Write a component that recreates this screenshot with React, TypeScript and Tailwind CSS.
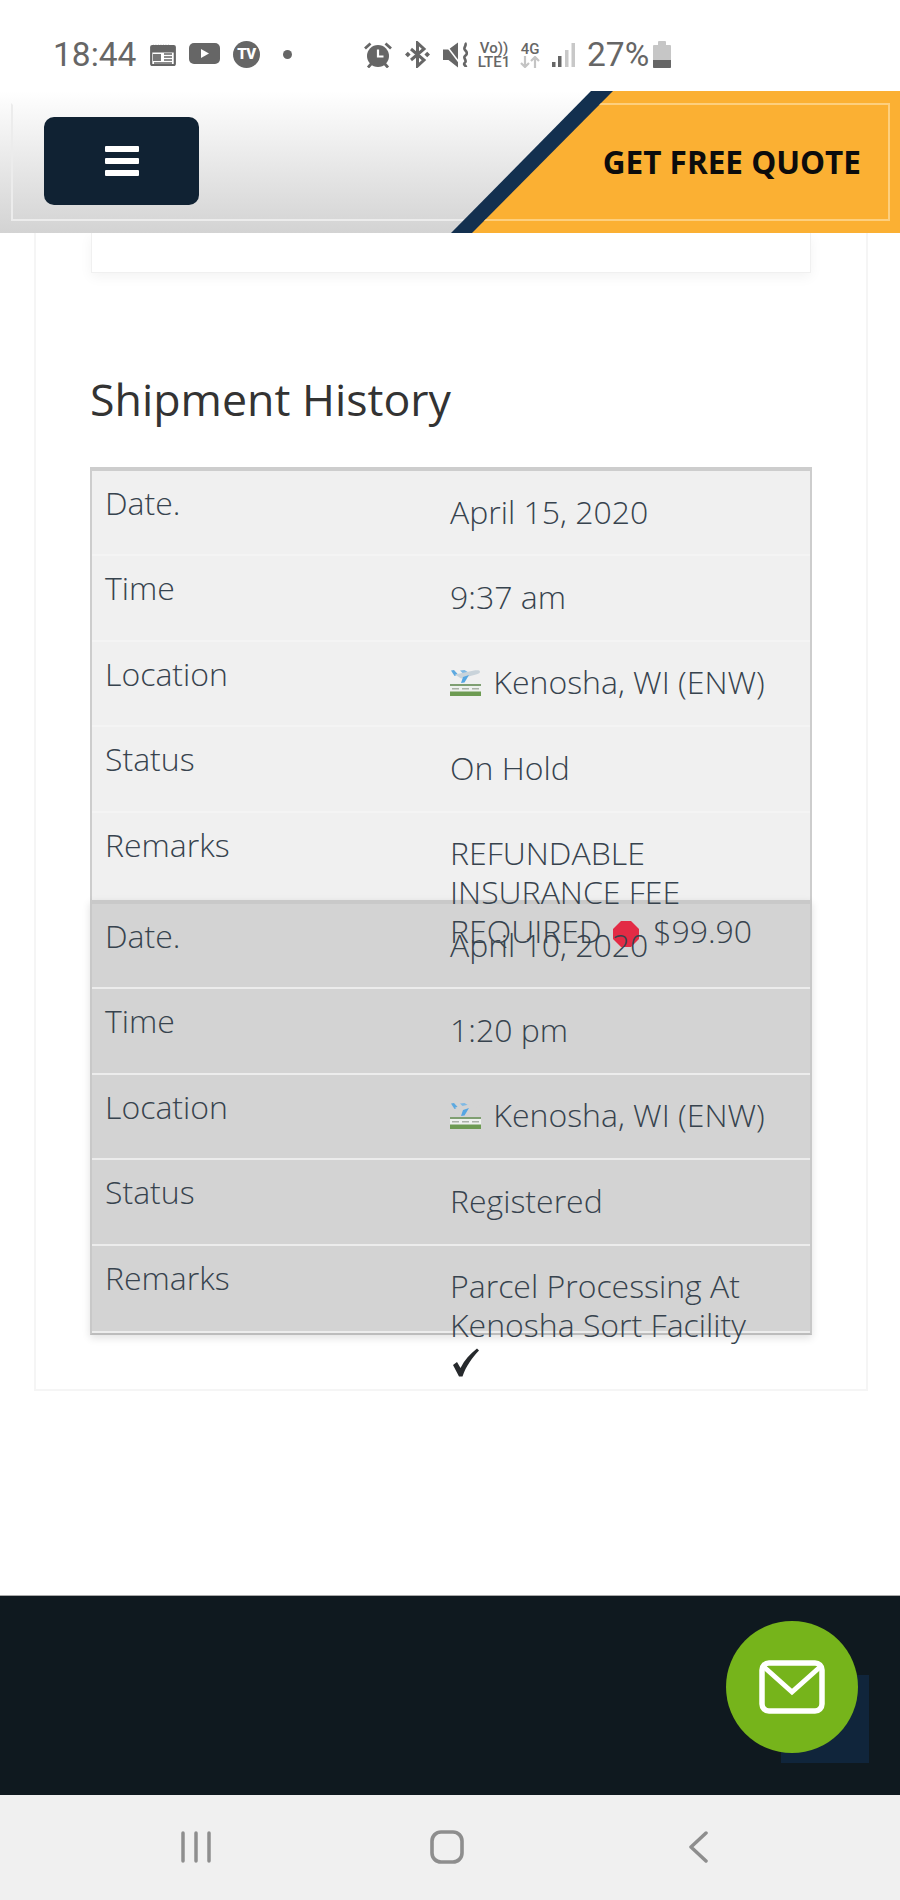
import React from 'react';

const Calendar = () => (
  <svg width="26" height="23" viewBox="0 0 26 23" className="ml-[15px]" fill="none">
    <path d="M1 3h1.500l1-1.500 1 1.500 1.500-1.500 1 1.500 1.500-1.500 1 1.500 1.500-1.500 1 1.500 1.500-1.500 1 1.500 1.500-1.500 1 1.500 1.500-1.500 1 1.500H25V6H1z" fill="#666" />
    <rect x="1.200" y="3" width="23.600" height="19" rx="1" stroke="#666" strokeWidth="2.200" />
    <rect x="2" y="6" width="22" height="3.500" fill="#666" />
    <path d="M3 11h8v7H3z" fill="#777" />
    <path d="M14 11h8M14 14h8M14 17h8M4 20h18" stroke="#666" strokeWidth="1.400" />
  </svg>
);

const Youtube = () => (
  <svg width="31" height="21" viewBox="0 0 31 21" className="ml-[13px] mb-[2px]">
    <rect width="31" height="21" rx="5" fill="#666" />
    <path d="M12 6l8 4.500-8 4.500z" fill="#fff" />
  </svg>
);

const Alarm = () => (
  <svg width="28" height="26" viewBox="0 0 28 26" className="ml-[72px]">
    <circle cx="14" cy="14" r="11" fill="#666" />
    <path d="M14 7.500v7h5.500" stroke="#fff" strokeWidth="2.200" fill="none" />
    <path d="M1 6.500L6.500 1.500M27 6.500L21.500 1.500M4 25.500l3.500-4M24 25.500l-3.500-4" stroke="#666" strokeWidth="2.800" />
  </svg>
);

const Bluetooth = () => (
  <svg width="25" height="27" viewBox="0 0 25 27" className="ml-[13px]" fill="none">
    <path d="M6 8l13 11-6.500 6V2L19 8 6 19" stroke="#666" strokeWidth="3" />
    <path d="M0 13.500l2.800-2.800 2.800 2.800-2.800 2.800zM19.400 13.500l2.800-2.800 2.800 2.800-2.800 2.800z" fill="#666" />
  </svg>
);

const Mute = () => (
  <svg width="25" height="26" viewBox="0 0 25 26" className="ml-[13px]" fill="none">
    <path d="M0 7.500h5.500L15 .5v25l-9.500-7.500H0z" fill="#666" />
    <path d="M1 .5l16 21" stroke="#fff" strokeWidth="1.500" />
    <path d="M22 1c2.500 2.500-2.500 4.500 0 7s2.500 4 0 6 2.500 4.500 0 6.500 1 3 1 4.500" stroke="#666" strokeWidth="2.600" />
  </svg>
);

const Signal = () => (
  <svg width="23" height="24" viewBox="0 0 23 24" className="ml-[12px]">
    <rect x="0" y="19" width="3.500" height="5" fill="#666" />
    <rect x="6" y="13" width="3.500" height="11" fill="#666" />
    <rect x="13" y="7" width="3.500" height="17" fill="#c8c8c8" />
    <rect x="19.500" y="0" width="3.500" height="24" fill="#c8c8c8" />
  </svg>
);

const Battery = () => (
  <div className="ml-[7px] flex w-[18px] flex-col items-center">
    <div className="h-[4px] w-[8px] rounded-t-[1px] bg-[#c6c6c6]" />
    <div className="flex h-[23px] w-[18px] flex-col justify-end rounded-[1px] bg-[#c6c6c6]">
      <div className="h-[8px] rounded-b-[1px] bg-[#666]" />
    </div>
  </div>
);

const PlaneEmoji = ({ body }: { body: string }) => (
  <svg width="31" height="27" viewBox="0 0 31 27" className="mr-[4px] inline-block align-[-2px]">
    <path d="M1 1.500l3-.5 4 4.500-3.500 1.500z" fill="#5da9e0" />
    <path d="M10 1.500l4.500-.5 4 2.500-5 1.500z" fill="#7fb9e4" />
    <path d="M5 5.500L24 1.500c3-.6 6-.3 6 1.200 0 1.300-2 2.300-4 2.800L11 9.500z" fill={body} />
    <path d="M13 8l6-2-4.500 7.500-3.500.5z" fill="#55a6e2" />
    <rect x="0" y="15" width="31" height="12" fill="#eef1ee" />
    <rect x="0" y="15" width="31" height="2" fill="#7f9f72" />
    <rect x="0" y="22.500" width="31" height="4.500" fill="#6d9b52" />
    <path d="M2 19.700h7M12 19.700h7M22 19.700h7" stroke="#a9b2a6" strokeWidth="1.600" />
  </svg>
);

const StopSign = () => (
  <svg width="26" height="26" viewBox="0 0 26 26" className="ml-[3px] mr-[6px] inline-block align-[-4px]">
    <path d="M8 0h10l8 8v10l-8 8H8l-8-8V8z" fill="#e32b45" />
  </svg>
);

const CheckMark = () => (
  <svg width="31" height="29" viewBox="0 0 31 29" className="inline-block align-[-1px]">
    <path d="M3 17l4-3 3.500 6C14.500 12 20 6 27 .5l2 2C22 10 16 18 12.500 28.500H9z" fill="#26292c" />
  </svg>
);

type RowProps = { label: string; tall?: boolean; sep: string; children: React.ReactNode };

const Row = ({ label, tall, sep, children }: RowProps) => (
  <div className={`flex border-b-2 ${sep} ${tall ? 'h-[87.400px]' : 'h-[85.400px]'}`}>
    <div className="w-[358px] pl-[13px] pt-[12px]">{label}</div>
    <div className="w-[322px] pt-[20.600px]">{children}</div>
  </div>
);

export default function App() {
  return (
    <div className="flex h-[1900px] w-[900px] flex-col overflow-hidden bg-white font-['Open_Sans',sans-serif]">
      {/* status bar */}
      <div className="flex h-[91px] shrink-0 items-center pl-[53px] pt-[18px] font-['Roboto',sans-serif] text-[33.500px] leading-none text-[#666]">
        <span className="w-[82px]">18:44</span>
        <Calendar />
        <Youtube />
        <div className="ml-[13px] flex h-[27px] w-[27px] items-center justify-center rounded-full bg-[#666] text-[15px] font-black tracking-[-0.5px] text-white">TV</div>
        <div className="ml-[23px] h-[9px] w-[9px] rounded-full bg-[#666]" />
        <Alarm />
        <Bluetooth />
        <Mute />
        <div className="ml-[10px] flex w-[32px] flex-col items-center text-[15px] font-medium leading-[14px]">
          <span>Vo))</span>
          <span>LTE1</span>
        </div>
        <div className="ml-[10px] flex w-[20px] flex-col items-center text-[15px] font-medium leading-[14px]">
          <span>4G</span>
          <svg width="20" height="12" viewBox="0 0 20 12" fill="none" stroke="#c4c4c4" strokeWidth="2.200">
            <path d="M5 0v11M1 7l4 4 4-4M15 12V1M11 5l4-4 4 4" />
          </svg>
        </div>
        <Signal />
        <span className="ml-[12px] w-[59px] whitespace-nowrap">27%</span>
        <Battery />
      </div>

      {/* site header */}
      <header className="relative h-[142px] shrink-0 bg-gradient-to-b from-white to-[#d3d3d3]">
        <div className="absolute inset-x-[11px] bottom-[12px] top-[12px] border-2 border-[#ececec] border-t-[#fbfbfb]" />
        <button className="absolute left-[44px] top-[26px] flex h-[88px] w-[155px] flex-col items-center justify-center gap-[6px] rounded-[10px] bg-[#102233]">
          <span className="h-[6px] w-[34px] rounded-[1px] bg-white" />
          <span className="h-[6px] w-[34px] rounded-[1px] bg-white" />
          <span className="h-[6px] w-[34px] rounded-[1px] bg-white" />
        </button>
        <div className="absolute inset-y-0 right-0 w-[449px] bg-[#13304f] [clip-path:polygon(140px_0,100%_0,100%_100%,0_100%)]" />
        <div className="absolute inset-y-0 right-0 w-[428px] bg-[#fbb033] [clip-path:polygon(141px_0,100%_0,100%_100%,0_100%)]">
          <div className="absolute bottom-[12px] left-0 right-[10px] top-[12px] border-2 border-[#fdcf7e]" />
          <div className="absolute inset-y-0 right-[39px] flex items-center text-[31.500px] font-bold text-[#0c0c0c]">GET FREE QUOTE</div>
        </div>
      </header>

      {/* tracking panel */}
      <main className="h-[1362px] shrink-0">
        <div className="ml-[34px] h-[1158px] w-[834px] border-x-2 border-b-2 border-[#f5f5f5] pl-[54px]">
          <div className="ml-[1px] h-[40px] w-[720px] border border-t-0 border-[#f0f0f0] bg-white shadow-[0_4px_12px_rgba(0,0,0,0.05)]" />
          <h2 className="mt-[100px] text-[44.700px] leading-[52px] text-[#333]">Shipment History</h2>

          <div className="mt-[42px] w-[722px] text-[32px] font-light leading-[39px] text-[#37434e]">
            <div className="h-[433px] border-x-2 border-t-4 border-[#cdcdcd] bg-[#f0f0f0]">
              <Row label="Date." sep="border-[#f4f4f4]">April 15, 2020</Row>
              <Row label="Time" sep="border-[#f4f4f4]">9:37 am</Row>
              <Row label="Location" sep="border-[#f4f4f4]"><PlaneEmoji body="#c9d3da" /> Kenosha, WI (ENW)</Row>
              <Row label="Status" sep="border-[#f4f4f4]">On Hold</Row>
              <Row label="Remarks" tall sep="border-transparent">
                REFUNDABLE INSURANCE FEE REQUIRED <StopSign /> $99.90
              </Row>
            </div>
            <div className="h-[435px] border-x-2 border-b-2 border-t-4 border-x-[#c8c8c8] border-b-[#bcbcbc] border-t-[#c9c9c9] bg-[#d3d3d3] shadow-[0_3px_8px_rgba(0,0,0,0.12)]">
              <Row label="Date." sep="border-[#ececec]">April 10, 2020</Row>
              <Row label="Time" sep="border-[#ececec]">1:20 pm</Row>
              <Row label="Location" sep="border-[#ececec]"><PlaneEmoji body="#d3d3d3" /> Kenosha, WI (ENW)</Row>
              <Row label="Status" sep="border-[#ececec]">Registered</Row>
              <Row label="Remarks" tall sep="border-[#ececec]">
                Parcel Processing At Kenosha Sort Facility <CheckMark />
              </Row>
            </div>
          </div>
        </div>
      </main>

      {/* footer */}
      <footer className="relative h-[200px] shrink-0 border-t border-[#a9a9a9] bg-[#0f191f]">
        <div className="absolute left-[781px] top-[79px] h-[88px] w-[88px] bg-[#10253b]" />
        <div className="absolute left-[726px] top-[25px] flex h-[132px] w-[132px] items-center justify-center rounded-full bg-[#76b41b]">
          <svg width="66" height="54" viewBox="0 0 66 54" fill="none" stroke="#fff">
            <rect x="3" y="3" width="60" height="48" rx="7" strokeWidth="5.500" />
            <path d="M5 7l28 25L61 7" strokeWidth="5" />
          </svg>
        </div>
      </footer>

      {/* android nav */}
      <nav className="flex h-[105px] shrink-0 items-center bg-[#f0f0f0] pb-[2px] pl-[181px]">
        <svg width="30" height="32" viewBox="0 0 30 32" stroke="#8e8e8e" strokeWidth="3.500" strokeLinecap="round">
          <path d="M2 2v28M15 2v28M28 2v28" />
        </svg>
        <svg width="34" height="34" viewBox="0 0 34 34" fill="none" stroke="#8e8e8e" strokeWidth="3.600" className="ml-[219px]">
          <rect x="2" y="2" width="30" height="30" rx="9" />
        </svg>
        <svg width="19" height="32" viewBox="0 0 19 32" fill="none" stroke="#8e8e8e" strokeWidth="3.500" strokeLinecap="round" strokeLinejoin="round" className="ml-[225px]">
          <path d="M17 2L2 16l15 14" />
        </svg>
      </nav>
    </div>
  );
}
